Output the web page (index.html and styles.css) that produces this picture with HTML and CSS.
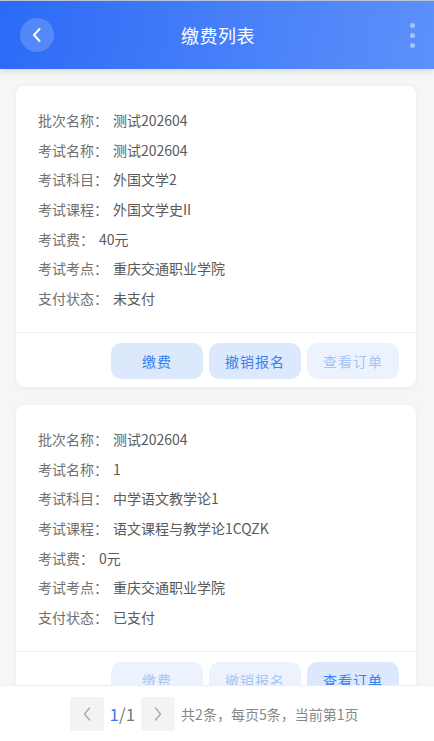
FILE: index.html
```html
<!DOCTYPE html>
<html>
<head>
    <meta charset="UTF-8">
    <title>缴费列表</title>
    <link rel="stylesheet" href="styles.css">
</head>
<body>
    <div class="header">
        <div class="back-btn">
            <svg width="12" height="16" viewBox="0 0 12 16"><path d="M8.5 2 L3 8 L8.5 14" fill="none" stroke="#fff" stroke-width="2" stroke-linecap="round" stroke-linejoin="round"/></svg>
        </div>
        <h1 class="title">缴费列表</h1>
        <div class="more-btn">
            <span></span><span></span><span></span>
        </div>
    </div>

    <div class="list">
        <div class="card">
            <div class="info">
                <div class="row"><span class="label">批次名称：</span><span class="value">测试202604</span></div>
                <div class="row"><span class="label">考试名称：</span><span class="value">测试202604</span></div>
                <div class="row"><span class="label">考试科目：</span><span class="value">外国文学2</span></div>
                <div class="row"><span class="label">考试课程：</span><span class="value">外国文学史II</span></div>
                <div class="row"><span class="label">考试费：</span><span class="value">40元</span></div>
                <div class="row"><span class="label">考试考点：</span><span class="value">重庆交通职业学院</span></div>
                <div class="row"><span class="label">支付状态：</span><span class="value">未支付</span></div>
            </div>
            <div class="actions">
                <button class="btn">缴费</button>
                <button class="btn">撤销报名</button>
                <button class="btn disabled">查看订单</button>
            </div>
        </div>

        <div class="card">
            <div class="info">
                <div class="row"><span class="label">批次名称：</span><span class="value">测试202604</span></div>
                <div class="row"><span class="label">考试名称：</span><span class="value">1</span></div>
                <div class="row"><span class="label">考试科目：</span><span class="value">中学语文教学论1</span></div>
                <div class="row"><span class="label">考试课程：</span><span class="value">语文课程与教学论1CQZK</span></div>
                <div class="row"><span class="label">考试费：</span><span class="value">0元</span></div>
                <div class="row"><span class="label">考试考点：</span><span class="value">重庆交通职业学院</span></div>
                <div class="row"><span class="label">支付状态：</span><span class="value">已支付</span></div>
            </div>
            <div class="actions">
                <button class="btn disabled">缴费</button>
                <button class="btn disabled">撤销报名</button>
                <button class="btn">查看订单</button>
            </div>
        </div>
    </div>

    <div class="pager">
        <div class="page-btn">
            <svg width="10" height="16" viewBox="0 0 10 16"><path d="M7.5 2 L2.5 8 L7.5 14" fill="none" stroke="#aaa" stroke-width="1.4" stroke-linecap="round" stroke-linejoin="round"/></svg>
        </div>
        <div class="page-num"><span class="current">1</span>/1</div>
        <div class="page-btn">
            <svg width="10" height="16" viewBox="0 0 10 16"><path d="M2.5 2 L7.5 8 L2.5 14" fill="none" stroke="#aaa" stroke-width="1.4" stroke-linecap="round" stroke-linejoin="round"/></svg>
        </div>
        <div class="page-info">共2条，每页5条，当前第1页</div>
    </div>
</body>
</html>
```

FILE: styles.css
```css
body {
    margin: 0;
    background-color: #f5f6f8;
    font-family: "Noto Sans CJK SC", "Noto Sans", sans-serif;
    color: #666;
}
.header {
    height: 68px;
    border-top: 1px solid #b9c4d8;
    background: linear-gradient(100deg, #2b6af6 0%, #4a82f9 60%, #5c90fb 100%);
    box-shadow: 0 2px 6px rgba(0,0,0,0.12);
    display: grid;
    grid-template-columns: 1fr auto 1fr;
    align-items: center;
    padding: 0 18px 0 20px;
}
.back-btn {
    width: 34px;
    height: 34px;
    border-radius: 50%;
    background: rgba(255,255,255,0.18);
    display: flex;
    align-items: center;
    justify-content: center;
}
.title {
    margin: 0;
    color: #fff;
    font-size: 18px;
    font-weight: normal;
    letter-spacing: 0.5px;
}
.more-btn {
    justify-self: end;
    width: 8px;
    display: flex;
    flex-direction: column;
    align-items: center;
    gap: 5px;
}
.more-btn span {
    width: 5px;
    height: 5px;
    border-radius: 50%;
    background: #a6c2fc;
}
.list {
    padding: 17px 18px 70px 16px;
}
.card {
    background: #fff;
    border-radius: 8px;
    box-shadow: 0 1px 6px rgba(0,0,0,0.05);
    margin-bottom: 18px;
}
.info {
    padding: 20px 22px 18px;
    border-bottom: 1px solid #eef0f3;
}
.row {
    height: 29.7px;
    line-height: 29.7px;
    font-size: 14px;
}
.label {
    color: #707070;
    margin-right: 5px;
}
.value {
    color: #5a5a5a;
}
.actions {
    display: flex;
    justify-content: flex-end;
    gap: 6px;
    padding: 10px 17px 8px;
}
.btn {
    width: 92px;
    height: 36px;
    border: none;
    border-radius: 10px;
    background: #dce9fd;
    color: #3a80ee;
    font-family: inherit;
    font-size: 14px;
    letter-spacing: 1px;
}
.btn.disabled {
    background: #edf3fe;
    color: #a6c5f3;
}
.pager {
    position: fixed;
    left: 0;
    right: 0;
    bottom: 0;
    height: 55px;
    background: #fff;
    border-top: 1px solid #eceef1;
    display: flex;
    align-items: center;
    justify-content: center;
    gap: 6px;
    padding-right: 6px;
}
.page-btn {
    width: 34px;
    height: 34px;
    border-radius: 3px;
    background: #f3f3f4;
    display: flex;
    align-items: center;
    justify-content: center;
}
.page-num {
    font-size: 17px;
    color: #777;
}
.page-num .current {
    color: #3a7cf0;
}
.page-info {
    font-size: 14px;
    color: #888;
}
```
